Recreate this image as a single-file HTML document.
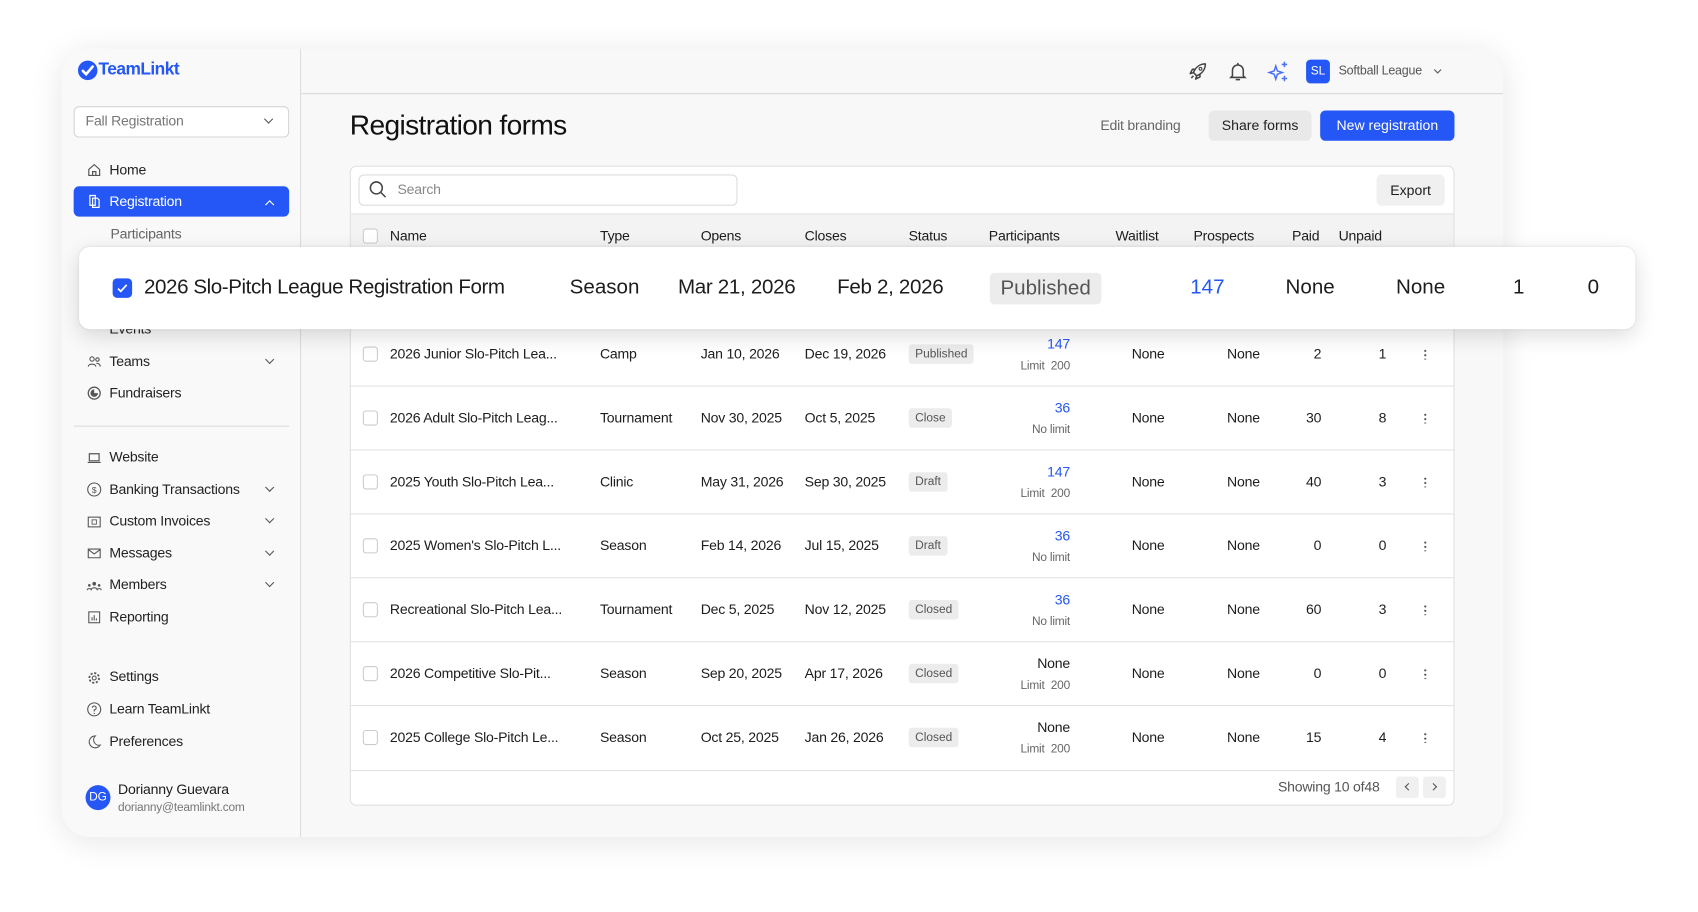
<!DOCTYPE html>
<html><head><meta charset="utf-8"><style>
*{box-sizing:border-box;margin:0;padding:0}
html,body{width:1698px;height:912px;overflow:hidden;background:#fff;font-family:"Liberation Sans",sans-serif;color:#1d1d1f}
#w{position:absolute;left:0;top:0;width:1570px;height:842px;transform:scale(1.083);transform-origin:0 0}
.a{position:absolute;white-space:nowrap}
.t{position:absolute;white-space:nowrap;height:20px;line-height:20px;font-size:13px;letter-spacing:-0.2px}
.card{position:absolute;left:57px;top:45px;width:1331px;height:728px;background:#f8f8f8;border-radius:26px 26px 26px 26px;box-shadow:0 4px 30px rgba(0,0,0,.10);overflow:hidden}
.side{position:absolute;left:0;top:0;width:221px;height:728px;background:#f9f9f9;border-right:1px solid #ddd}
.ic{position:absolute;width:14px;height:14px}
.nav{font-size:13px;color:#222}
.chev{position:absolute;width:6px;height:6px;border-right:1.3px solid #555;border-bottom:1.3px solid #555;transform:rotate(45deg)}
.cb{position:absolute;width:14px;height:14px;border:1px solid #ccc;border-radius:3px;background:#fff}
.badge{position:absolute;height:18px;line-height:18px;padding:0 6px;font-size:11px;color:#555;background:#ececec;border-radius:3px}
.r{text-align:right}
.blue{color:#2457f5}
.sub{font-size:11px;color:#666}
.line{position:absolute;left:323px;width:1019px;height:1px;background:#e2e2e2}
.dots{position:absolute;width:2px;height:10px;background:radial-gradient(circle,#555 0.9px,transparent 1px) 0 0/2px 4px}
</style></head><body><div id="w">
<div class="card">
 <div class="side"></div>
 <div class="a" style="left:221px;top:41px;width:1110px;height:1px;background:#d8d8d8"></div>
</div>
<!-- logo -->
<svg class="a" style="left:71px;top:55px" width="20" height="20" viewBox="0 0 20 20"><circle cx="10" cy="10" r="9" fill="#2457f5"/><path d="M5.5 10.5l3 3 6-7" stroke="#fff" stroke-width="2.4" fill="none" stroke-linecap="round"/></svg>
<div class="a" style="left:91px;top:55px;font-size:16px;font-weight:bold;color:#2457f5;letter-spacing:-0.5px;line-height:20px">TeamLinkt</div>
<!-- dropdown -->
<div class="a" style="left:68px;top:98px;width:199px;height:29px;border:1px solid #d5d5d5;border-radius:5px;background:#fff"></div>
<div class="t" style="left:79px;top:102px;color:#777">Fall Registration</div>
<div class="chev" style="left:245px;top:107px"></div>
<!-- nav -->
<svg class="ic" style="left:80px;top:150px" viewBox="0 0 14 14"><path d="M2 6.5L7 2l5 4.5V12H2z M5.5 12V8.5h3V12" fill="none" stroke="#555" stroke-width="1.1"/></svg>
<div class="t nav" style="left:101px;top:147px">Home</div>
<div class="a" style="left:68px;top:172px;width:199px;height:28px;background:#2457f5;border-radius:5px"></div>
<svg class="ic" style="left:80px;top:179px" viewBox="0 0 14 14"><path d="M3 1.5h5v9H3z M5.5 4h4.5l1.5 1.5V12.5h-6z" fill="none" stroke="#fff" stroke-width="1.1"/></svg>
<div class="t nav" style="left:101px;top:176px;color:#fff">Registration</div>
<div class="chev" style="left:246px;top:186px;border-color:#fff;transform:rotate(-135deg)"></div>
<div class="t nav" style="left:102px;top:206px;color:#666">Participants</div>
<div class="t nav" style="left:101px;top:294px">Events</div>
<svg class="ic" style="left:80px;top:327px" viewBox="0 0 14 14"><circle cx="5" cy="4.5" r="2" fill="none" stroke="#555"/><circle cx="10" cy="5" r="1.6" fill="none" stroke="#555"/><path d="M1.5 11.5c0-3 7-3 7 0M9 8.5c2 0 3.5.8 3.5 3" fill="none" stroke="#555"/></svg>
<div class="t nav" style="left:101px;top:324px">Teams</div><div class="chev" style="left:246px;top:329px"></div>
<svg class="ic" style="left:80px;top:356px" viewBox="0 0 14 14"><circle cx="7" cy="7" r="5.5" fill="none" stroke="#555" stroke-width="1.2"/><path d="M7 3.5a3.5 3.5 0 1 0 3.5 3.5H7z" fill="#555"/></svg>
<div class="t nav" style="left:101px;top:353px">Fundraisers</div>
<div class="a" style="left:68px;top:393px;width:199px;height:1px;background:#ddd"></div>
<svg class="ic" style="left:80px;top:416px" viewBox="0 0 14 14"><path d="M2.5 3h9v6.5h-9z M1 11h12" fill="none" stroke="#555" stroke-width="1.1"/></svg>
<div class="t nav" style="left:101px;top:412px">Website</div>
<svg class="ic" style="left:80px;top:445px" viewBox="0 0 14 14"><circle cx="7" cy="7" r="6" fill="none" stroke="#555"/><text x="7" y="10" font-size="8" text-anchor="middle" fill="#555" font-family="Liberation Sans">$</text></svg>
<div class="t nav" style="left:101px;top:442px">Banking Transactions</div><div class="chev" style="left:246px;top:447px"></div>
<svg class="ic" style="left:80px;top:475px" viewBox="0 0 14 14"><rect x="1.5" y="2.5" width="11" height="9" fill="none" stroke="#555"/><rect x="5" y="5" width="4" height="4" fill="none" stroke="#555" stroke-width=".8"/></svg>
<div class="t nav" style="left:101px;top:471px">Custom Invoices</div><div class="chev" style="left:246px;top:476px"></div>
<svg class="ic" style="left:80px;top:504px" viewBox="0 0 14 14"><path d="M1.5 3h11v8h-11z M1.5 3.5L7 7.5l5.5-4" fill="none" stroke="#555"/></svg>
<div class="t nav" style="left:101px;top:501px">Messages</div><div class="chev" style="left:246px;top:506px"></div>
<svg class="ic" style="left:80px;top:534px" viewBox="0 0 14 14"><circle cx="7" cy="5" r="1.7" fill="#555"/><circle cx="2.5" cy="6.5" r="1.2" fill="#555"/><circle cx="11.5" cy="6.5" r="1.2" fill="#555"/><path d="M4 11c0-3 6-3 6 0M0.5 11c0-2 4-2 4 0M9.5 11c0-2 4-2 4 0" fill="none" stroke="#555"/></svg>
<div class="t nav" style="left:101px;top:530px">Members</div><div class="chev" style="left:246px;top:535px"></div>
<svg class="ic" style="left:80px;top:563px" viewBox="0 0 14 14"><rect x="2" y="2" width="10" height="10" fill="none" stroke="#555"/><path d="M5 10V7M7 10V5M9 10V8" stroke="#555"/></svg>
<div class="t nav" style="left:101px;top:560px">Reporting</div>
<svg class="ic" style="left:80px;top:619px" viewBox="0 0 14 14"><circle cx="7" cy="7" r="4.5" fill="none" stroke="#555" stroke-width="1.6" stroke-dasharray="2 1.5"/><circle cx="7" cy="7" r="1.8" fill="none" stroke="#555"/></svg>
<div class="t nav" style="left:101px;top:615px">Settings</div>
<svg class="ic" style="left:80px;top:648px" viewBox="0 0 14 14"><circle cx="7" cy="7" r="6" fill="none" stroke="#555"/><path d="M5.2 5.5a1.8 1.8 0 1 1 1.8 2V9" fill="none" stroke="#555"/><circle cx="7" cy="10.7" r=".6" fill="#555"/></svg>
<div class="t nav" style="left:101px;top:645px">Learn TeamLinkt</div>
<svg class="ic" style="left:80px;top:678px" viewBox="0 0 14 14"><path d="M8 1.5A5.5 5.5 0 1 0 12.5 10 5 5 0 0 1 8 1.5z" fill="none" stroke="#555"/></svg>
<div class="t nav" style="left:101px;top:675px">Preferences</div>
<div class="a" style="left:79px;top:725px;width:23px;height:23px;border-radius:50%;background:#2457f5;color:#fff;font-size:11px;line-height:23px;text-align:center">DG</div>
<div class="t" style="left:109px;top:719px;font-size:13px">Dorianny Guevara</div>
<div class="t" style="left:109px;top:736px;font-size:11px;color:#777">dorianny@teamlinkt.com</div>
<!-- topbar -->
<svg class="a" style="left:1096px;top:56px" width="20" height="20" viewBox="0 0 20 20"><path d="M17 3c-5 0-9 3-11 8l3 3c5-2 8-6 8-11z M6 11l-3 1 2-4h3 M9 14l-1 3 4-2v-3 M4 16l2-2" fill="none" stroke="#444" stroke-width="1.4" stroke-linejoin="round"/><circle cx="12.5" cy="7.5" r="1.3" fill="none" stroke="#444"/></svg>
<svg class="a" style="left:1133px;top:56px" width="20" height="20" viewBox="0 0 20 20"><path d="M5 14V9a5 5 0 0 1 10 0v5l1.5 1.5h-13z M8 17.5h4 M10 2v2" fill="none" stroke="#444" stroke-width="1.4"/></svg>
<svg class="a" style="left:1170px;top:55px" width="22" height="22" viewBox="0 0 22 22"><path d="M8 6l1.5 4.5L14 12l-4.5 1.5L8 18l-1.5-4.5L2 12l4.5-1.5z" fill="none" stroke="#4b6ff5" stroke-width="1.4"/><path d="M16 2v5M13.5 4.5h5M16 15v5M13.5 17.5h5" stroke="#4b6ff5" stroke-width="1.4"/></svg>
<div class="a" style="left:1206px;top:55px;width:22px;height:22px;border-radius:4px;background:#2457f5;color:#fff;font-size:11px;line-height:22px;text-align:center">SL</div>
<div class="t" style="left:1236px;top:56px;font-size:11.5px;color:#555">Softball League</div>
<div class="chev" style="left:1325px;top:62px;width:5px;height:5px"></div>
<!-- title -->
<div class="a" style="left:323px;top:98px;font-size:26px;line-height:34px;letter-spacing:-0.6px;color:#111">Registration forms</div>
<div class="t" style="left:1016px;top:106px;color:#666">Edit branding</div>
<div class="a" style="left:1116px;top:102px;width:95px;height:28px;border-radius:5px;background:#e9e9e9;font-size:13px;line-height:28px;text-align:center;color:#222">Share forms</div>
<div class="a" style="left:1219px;top:102px;width:124px;height:28px;border-radius:5px;background:#2457f5;font-size:13px;line-height:28px;text-align:center;color:#fff">New registration</div>
<!-- table -->
<div class="a" style="left:323px;top:153px;width:1020px;height:591px;background:#fff;border:1px solid #e0e0e0;border-radius:6px"></div>
<div class="a" style="left:331px;top:161px;width:350px;height:29px;border:1px solid #ddd;border-radius:5px"></div>
<svg class="a" style="left:340px;top:166px" width="18" height="18" viewBox="0 0 18 18"><circle cx="7.5" cy="7.5" r="5.5" fill="none" stroke="#444" stroke-width="1.4"/><path d="M11.5 11.5l4.5 4.5" stroke="#444" stroke-width="1.4"/></svg>
<div class="t" style="left:367px;top:165px;color:#888">Search</div>
<div class="a" style="left:1271px;top:161px;width:63px;height:29px;background:#f0f0f0;border-radius:5px;font-size:13px;line-height:29px;text-align:center">Export</div>
<div class="a" style="left:324px;top:197px;width:1018px;height:100px;background:#f3f3f3;border-top:1px solid #e2e2e2"></div>
<div class="cb" style="left:335px;top:211px"></div>
<div class="t" style="left:360px;top:208px">Name</div><div class="t" style="left:554px;top:208px">Type</div><div class="t" style="left:647px;top:208px">Opens</div><div class="t" style="left:743px;top:208px">Closes</div><div class="t" style="left:839px;top:208px">Status</div><div class="t" style="left:913px;top:208px">Participants</div><div class="t" style="left:1030px;top:208px">Waitlist</div><div class="t" style="left:1102px;top:208px">Prospects</div><div class="t" style="left:1193px;top:208px">Paid</div><div class="t" style="left:1236px;top:208px">Unpaid</div>
<div class="a" style="left:324px;top:297px;width:1018px;height:59px;background:#fff"></div>
<div class="line" style="top:297px"></div><div class="line" style="top:356px"></div><div class="line" style="top:415px"></div><div class="line" style="top:474px"></div><div class="line" style="top:533px"></div><div class="line" style="top:592px"></div><div class="line" style="top:651px"></div><div class="line" style="top:711px"></div>

<!-- row1 327 -->
<div class="cb" style="left:335px;top:320px"></div><div class="t" style="left:360px;top:317px">2026 Junior Slo-Pitch Lea...</div><div class="t" style="left:554px;top:317px">Camp</div><div class="t" style="left:647px;top:317px">Jan 10, 2026</div><div class="t" style="left:743px;top:317px">Dec 19, 2026</div><div class="badge" style="left:839px;top:318px">Published</div>
<div class="t r blue" style="left:900px;width:88px;top:308px">147</div><div class="t r sub" style="left:900px;width:88px;top:328px">Limit&nbsp; 200</div>
<div class="t" style="left:1045px;top:317px">None</div><div class="t" style="left:1133px;top:317px">None</div><div class="t r" style="left:1180px;width:40px;top:317px">2</div><div class="t r" style="left:1240px;width:40px;top:317px">1</div><div class="dots" style="left:1315px;top:322px"></div>
<!-- row2 386 -->
<div class="cb" style="left:335px;top:379px"></div><div class="t" style="left:360px;top:376px">2026 Adult Slo-Pitch Leag...</div><div class="t" style="left:554px;top:376px">Tournament</div><div class="t" style="left:647px;top:376px">Nov 30, 2025</div><div class="t" style="left:743px;top:376px">Oct 5, 2025</div><div class="badge" style="left:839px;top:377px">Close</div>
<div class="t r blue" style="left:900px;width:88px;top:367px">36</div><div class="t r sub" style="left:900px;width:88px;top:387px">No limit</div>
<div class="t" style="left:1045px;top:376px">None</div><div class="t" style="left:1133px;top:376px">None</div><div class="t r" style="left:1180px;width:40px;top:376px">30</div><div class="t r" style="left:1240px;width:40px;top:376px">8</div><div class="dots" style="left:1315px;top:381px"></div>
<!-- row3 445 -->
<div class="cb" style="left:335px;top:438px"></div><div class="t" style="left:360px;top:435px">2025 Youth Slo-Pitch Lea...</div><div class="t" style="left:554px;top:435px">Clinic</div><div class="t" style="left:647px;top:435px">May 31, 2026</div><div class="t" style="left:743px;top:435px">Sep 30, 2025</div><div class="badge" style="left:839px;top:436px">Draft</div>
<div class="t r blue" style="left:900px;width:88px;top:426px">147</div><div class="t r sub" style="left:900px;width:88px;top:446px">Limit&nbsp; 200</div>
<div class="t" style="left:1045px;top:435px">None</div><div class="t" style="left:1133px;top:435px">None</div><div class="t r" style="left:1180px;width:40px;top:435px">40</div><div class="t r" style="left:1240px;width:40px;top:435px">3</div><div class="dots" style="left:1315px;top:440px"></div>
<!-- row4 504 -->
<div class="cb" style="left:335px;top:497px"></div><div class="t" style="left:360px;top:494px">2025 Women's Slo-Pitch L...</div><div class="t" style="left:554px;top:494px">Season</div><div class="t" style="left:647px;top:494px">Feb 14, 2026</div><div class="t" style="left:743px;top:494px">Jul 15, 2025</div><div class="badge" style="left:839px;top:495px">Draft</div>
<div class="t r blue" style="left:900px;width:88px;top:485px">36</div><div class="t r sub" style="left:900px;width:88px;top:505px">No limit</div>
<div class="t" style="left:1045px;top:494px">None</div><div class="t" style="left:1133px;top:494px">None</div><div class="t r" style="left:1180px;width:40px;top:494px">0</div><div class="t r" style="left:1240px;width:40px;top:494px">0</div><div class="dots" style="left:1315px;top:499px"></div>
<!-- row5 563 -->
<div class="cb" style="left:335px;top:556px"></div><div class="t" style="left:360px;top:553px">Recreational Slo-Pitch Lea...</div><div class="t" style="left:554px;top:553px">Tournament</div><div class="t" style="left:647px;top:553px">Dec 5, 2025</div><div class="t" style="left:743px;top:553px">Nov 12, 2025</div><div class="badge" style="left:839px;top:554px">Closed</div>
<div class="t r blue" style="left:900px;width:88px;top:544px">36</div><div class="t r sub" style="left:900px;width:88px;top:564px">No limit</div>
<div class="t" style="left:1045px;top:553px">None</div><div class="t" style="left:1133px;top:553px">None</div><div class="t r" style="left:1180px;width:40px;top:553px">60</div><div class="t r" style="left:1240px;width:40px;top:553px">3</div><div class="dots" style="left:1315px;top:558px"></div>
<!-- row6 622 -->
<div class="cb" style="left:335px;top:615px"></div><div class="t" style="left:360px;top:612px">2026 Competitive Slo-Pit...</div><div class="t" style="left:554px;top:612px">Season</div><div class="t" style="left:647px;top:612px">Sep 20, 2025</div><div class="t" style="left:743px;top:612px">Apr 17, 2026</div><div class="badge" style="left:839px;top:613px">Closed</div>
<div class="t r" style="left:900px;width:88px;top:603px">None</div><div class="t r sub" style="left:900px;width:88px;top:623px">Limit&nbsp; 200</div>
<div class="t" style="left:1045px;top:612px">None</div><div class="t" style="left:1133px;top:612px">None</div><div class="t r" style="left:1180px;width:40px;top:612px">0</div><div class="t r" style="left:1240px;width:40px;top:612px">0</div><div class="dots" style="left:1315px;top:617px"></div>
<!-- row7 681 -->
<div class="cb" style="left:335px;top:674px"></div><div class="t" style="left:360px;top:671px">2025 College Slo-Pitch Le...</div><div class="t" style="left:554px;top:671px">Season</div><div class="t" style="left:647px;top:671px">Oct 25, 2025</div><div class="t" style="left:743px;top:671px">Jan 26, 2026</div><div class="badge" style="left:839px;top:672px">Closed</div>
<div class="t r" style="left:900px;width:88px;top:662px">None</div><div class="t r sub" style="left:900px;width:88px;top:682px">Limit&nbsp; 200</div>
<div class="t" style="left:1045px;top:671px">None</div><div class="t" style="left:1133px;top:671px">None</div><div class="t r" style="left:1180px;width:40px;top:671px">15</div><div class="t r" style="left:1240px;width:40px;top:671px">4</div><div class="dots" style="left:1315px;top:676px"></div>
<!-- footer -->
<div class="t" style="left:1180px;top:717px;color:#555">Showing 10 of48</div>
<div class="a" style="left:1289px;top:717px;width:21px;height:20px;background:#f0f0f0;border-radius:3px"></div>
<div class="a" style="left:1314px;top:717px;width:21px;height:20px;background:#f0f0f0;border-radius:3px"></div>
<div class="chev" style="left:1298px;top:724px;width:5px;height:5px;transform:rotate(135deg)"></div>
<div class="chev" style="left:1321px;top:724px;width:5px;height:5px;transform:rotate(-45deg)"></div>
<!-- overlay -->
<div class="a" style="left:73px;top:228px;width:1437px;height:76px;background:#fff;border-radius:10px;box-shadow:0 6px 20px rgba(0,0,0,.14),0 0 2px rgba(0,0,0,.1)"></div>
<div class="a" style="left:104px;top:257px;width:18px;height:18px;border-radius:4px;background:#2457f5"></div>
<svg class="a" style="left:104px;top:257px" width="18" height="18" viewBox="0 0 18 18"><path d="M5 9.5l2.5 2.5L13 6" stroke="#fff" stroke-width="1.6" fill="none"/></svg>
<div class="a" style="left:133px;top:254px;font-size:19px;line-height:24px;letter-spacing:-0.4px">2026 Slo-Pitch League Registration Form</div>
<div class="a" style="left:526px;top:254px;font-size:19px;line-height:24px">Season</div>
<div class="a" style="left:626px;top:254px;font-size:19px;line-height:24px;letter-spacing:-0.3px">Mar 21, 2026</div>
<div class="a" style="left:773px;top:254px;font-size:19px;line-height:24px;letter-spacing:-0.3px">Feb 2, 2026</div>
<div class="a" style="left:914px;top:252px;width:103px;height:29px;background:#ececec;border-radius:4px;font-size:19px;line-height:29px;text-align:center;color:#555">Published</div>
<div class="a blue" style="left:1099px;top:254px;font-size:19px;line-height:24px">147</div>
<div class="a" style="left:1187px;top:254px;font-size:19px;line-height:24px">None</div>
<div class="a" style="left:1289px;top:254px;font-size:19px;line-height:24px">None</div>
<div class="a" style="left:1397px;top:254px;font-size:19px;line-height:24px">1</div>
<div class="a" style="left:1466px;top:254px;font-size:19px;line-height:24px">0</div>
</div></body></html>
